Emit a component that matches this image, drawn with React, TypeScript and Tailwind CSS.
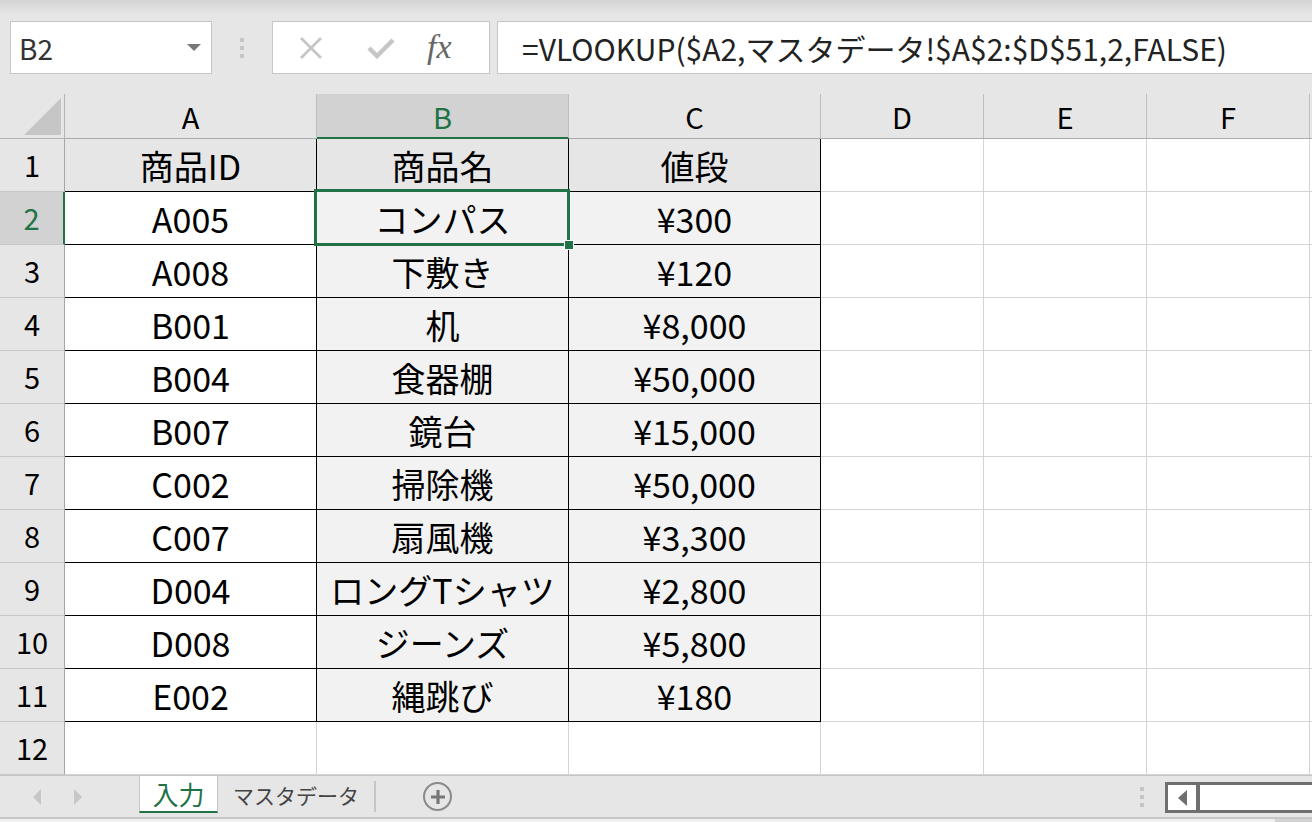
import { Fragment } from "react";

const rows: [string, string, string][] = [
  ["A005", "コンパス", "¥300"],
  ["A008", "下敷き", "¥120"],
  ["B001", "机", "¥8,000"],
  ["B004", "食器棚", "¥50,000"],
  ["B007", "鏡台", "¥15,000"],
  ["C002", "掃除機", "¥50,000"],
  ["C007", "扇風機", "¥3,300"],
  ["D004", "ロングTシャツ", "¥2,800"],
  ["D008", "ジーンズ", "¥5,800"],
  ["E002", "縄跳び", "¥180"],
];

const columns = ["A", "B", "C", "D", "E", "F"];

// values shown in the sheet, row 1 is the table heading
const sheet: string[][] = [["商品ID", "商品名", "値段"], ...rows, ["", "", ""]];

const FormulaBar = () => (
  <div className="flex h-[53px] items-stretch">
    <div className="ml-[10px] w-[202px] bg-white border border-[#c6c6c6] flex items-center justify-between pl-[8px] pr-[10px]">
      <span className="text-[28px] text-[#333] leading-none">B2</span>
      <svg width="14" height="7" viewBox="0 0 14 7">
        <path d="M0 0 L14 0 L7 7 Z" fill="#777" />
      </svg>
    </div>
    <div className="w-[60px] flex flex-col items-center justify-center gap-[4px]">
      <div className="w-[4px] h-[4px] bg-[#c6c6c6]" />
      <div className="w-[4px] h-[4px] bg-[#c6c6c6]" />
      <div className="w-[4px] h-[4px] bg-[#c6c6c6]" />
    </div>
    <div className="w-[218px] bg-white border border-[#c6c6c6] flex items-center">
      <svg className="ml-[26px]" width="24" height="24" viewBox="0 0 24 24">
        <path d="M2 2 L22 22 M22 2 L2 22" stroke="#c6c6c6" strokeWidth="2.8" />
      </svg>
      <svg className="ml-[44px]" width="28" height="22" viewBox="0 0 28 22">
        <path d="M2 11 L10 19 L26 3" stroke="#c6c6c6" strokeWidth="4.5" fill="none" />
      </svg>
      <span className="ml-[32px] mb-[2px] font-['Liberation_Serif',serif] italic text-[34px] text-[#666] leading-none">
        fx
      </span>
    </div>
    <div className="ml-[7px] flex-1 bg-white border border-r-0 border-[#c6c6c6] flex items-center pl-[24px]">
      <span className="text-[30px] text-[#222] leading-none">
        =VLOOKUP($A2,マスタデータ!$A$2:$D$51,2,FALSE)
      </span>
    </div>
  </div>
);

const Grid = () => (
  <div className="grid grid-cols-[65px_252px_252px_252px_163px_163px_163px_2px] grid-rows-[45px_repeat(12,53px)]">
    {/* corner */}
    <div className="relative bg-[#e6e6e6] border-r border-b border-[#b4b4b4]">
      <svg className="absolute right-[3px] bottom-[3px]" width="37" height="37" viewBox="0 0 37 37">
        <path d="M37 0 L37 37 L0 37 Z" fill="#c6c6c6" />
      </svg>
    </div>
    {columns.map((c) => (
      <div
        key={c}
        className={
          c === "B"
            ? "flex items-center justify-center bg-[#d2d2d2] border-r border-r-[#bdbdbd] border-b-2 border-b-[#217346] text-[29px] text-[#217346] pt-[2px]"
            : "flex items-center justify-center bg-[#e6e6e6] border-r border-r-[#bdbdbd] border-b border-b-[#ababab] text-[29px] text-black pt-[2px]"
        }
      >
        {c}
      </div>
    ))}
    <div className="bg-[#e6e6e6] border-b border-[#ababab]" />

    {sheet.map((values, i) => {
      const r = i + 1;
      const selectedRow = r === 2;
      return (
        <Fragment key={r}>
          <div
            className={
              selectedRow
                ? "flex items-center justify-center bg-[#d2d2d2] border-r-2 border-r-[#217346] border-b border-b-[#c8c8c8] text-[29px] text-[#217346]"
                : "flex items-center justify-center bg-[#e6e6e6] border-r border-r-[#a6a6a6] border-b border-b-[#c8c8c8] text-[29px] text-black"
            }
          >
            {r}
          </div>
          {columns.map((c, ci) => {
            const inTable = r <= 11 && ci <= 2;
            let bg = "bg-white";
            if (inTable && r === 1) bg = "bg-[#e6e6e6]";
            else if (inTable && ci > 0) bg = "bg-[#f2f2f2]";
            const border = inTable
              ? "border-r border-b border-black"
              : "border-r border-b border-[#d4d4d4]";
            const text = ci <= 2 ? values[ci] : "";
            const selected = r === 2 && c === "B";
            return (
              <div
                key={c}
                className={`relative flex items-center justify-center text-[34px] text-black ${bg} ${border} ${selected ? "z-10" : ""}`}
              >
                {text}
                {selected && (
                  <div className="absolute -left-[3px] -top-[3px] -right-[2px] -bottom-[2px] border-[3px] border-[#217346]">
                    <div className="absolute -right-[6px] -bottom-[6px] w-[8px] h-[8px] bg-[#217346] outline outline-1 outline-white" />
                  </div>
                )}
              </div>
            );
          })}
          <div className="bg-white border-b border-[#d4d4d4]" />
        </Fragment>
      );
    })}
  </div>
);

const SheetTabs = () => (
  <div className="h-[44px] border-t border-[#c6c6c6] border-b-2 border-b-[#c6c6c6] flex items-stretch">
    <div className="w-[139px] flex items-center">
      <svg className="ml-[33px]" width="8" height="16" viewBox="0 0 8 16">
        <path d="M8 0 L0 8 L8 16 Z" fill="#c6c6c6" />
      </svg>
      <svg className="ml-[33px]" width="8" height="16" viewBox="0 0 8 16">
        <path d="M0 0 L8 8 L0 16 Z" fill="#c6c6c6" />
      </svg>
    </div>
    <div className="w-[79px] mb-[4px] bg-white border-x border-[#c6c6c6] border-b-2 border-b-[#217346] flex items-center justify-center text-[26px] text-[#217346]">
      入力
    </div>
    <div className="ml-[15px] w-[127px] flex items-center whitespace-nowrap text-[21px] text-[#444] pb-[2px]">
      マスタデータ
    </div>
    <div className="ml-[14px] my-[5px] w-[2px] bg-[#c6c6c6]" />
    <div className="ml-[47px] flex items-center">
      <div className="w-[29px] h-[29px] rounded-full border-2 border-[#8a8a8a] flex items-center justify-center">
        <svg width="14" height="14" viewBox="0 0 14 14">
          <path d="M7 0 V14 M0 7 H14" stroke="#777" strokeWidth="3.2" />
        </svg>
      </div>
    </div>
    <div className="flex-1" />
    <div className="flex flex-col items-center justify-center gap-[4px] mr-[21px]">
      <div className="w-[4px] h-[4px] bg-[#c6c6c6]" />
      <div className="w-[4px] h-[4px] bg-[#c6c6c6]" />
      <div className="w-[4px] h-[4px] bg-[#c6c6c6]" />
    </div>
    <div className="w-[147px] mt-[6px] mb-[4px] bg-white border-[3px] border-r-0 border-[#6f6f6f] flex">
      <div className="w-[32px] border-r-[4px] border-[#6f6f6f] flex items-center justify-center">
        <svg width="9" height="16" viewBox="0 0 9 16">
          <path d="M9 0 L0 8 L9 16 Z" fill="#6f6f6f" />
        </svg>
      </div>
    </div>
  </div>
);

const App = () => {
  return (
    <div className="w-[1312px] h-[822px] overflow-hidden flex flex-col bg-[#e6e6e6] font-['Noto_Sans_CJK_JP',sans-serif]">
      <div className="h-[21px] bg-[linear-gradient(#d4d4d4,#e6e6e6_70%)]" />
      <FormulaBar />
      <div className="h-[20px]" />
      <Grid />
      <SheetTabs />
      <div className="flex-1 flex bg-[#f0f0f0]">
        <div className="flex-1" />
        <div className="w-[37px] bg-[#d2d2d2]" />
      </div>
    </div>
  );
};

export default App;
